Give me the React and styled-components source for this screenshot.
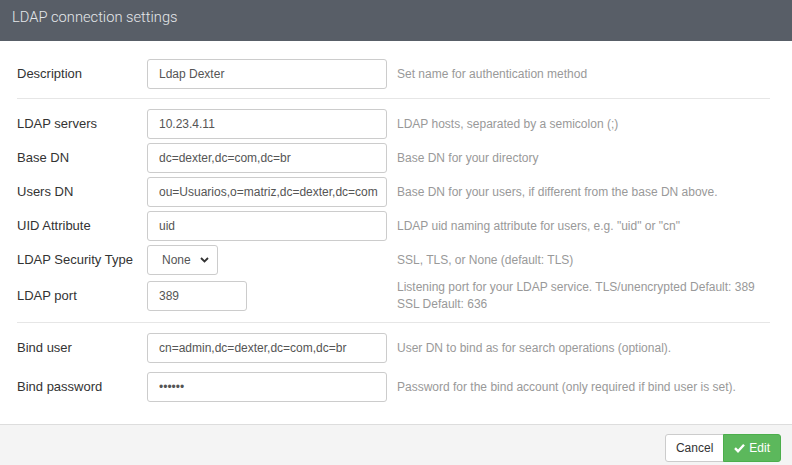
import React from 'react';
import styled, { createGlobalStyle } from 'styled-components';

const Global = createGlobalStyle`
  html, body { margin: 0; padding: 0; background: #fff; overflow: hidden; }
  body { font-family: "Liberation Sans", Arial, sans-serif; font-size: 13px; color: #333; }
`;

const Modal = styled.div`
  width: 792px;
  height: 465px;
  display: flex;
  flex-direction: column;
`;

const Header = styled.div`
  height: 41px;
  background: #585e67;
  color: #e4e7ea;
  font-family: Roboto, sans-serif;
  font-weight: 300;
  font-size: 14.7px;
  padding: 0 12px 7px;
  display: flex;
  align-items: center;
  box-sizing: border-box;
`;

const Body = styled.div`
  padding: 18px 22px 0 17px;
  flex: 1;
`;

const Row = styled.div`
  display: grid;
  grid-template-columns: 130px 250px 1fr;
  align-items: center;
  margin-top: ${p => p.top || 0}px;
  min-height: 30px;
`;

const Label = styled.label`
  font-size: 13px;
  color: #333;
  margin-top: -1px;
`;

const Input = styled.input`
  box-sizing: border-box;
  width: ${p => p.w || 240}px;
  height: 30px;
  border: 1px solid #ccc;
  border-radius: 3px;
  padding: 0 7px 0 11px;
  font-family: "Liberation Sans", Arial, sans-serif;
  font-size: 12px;
  color: #555;
  outline: none;
  background: #fff;
`;

const SelectWrap = styled.div`
  position: relative;
  width: 71px;
  height: 30px;
`;

const Select = styled.select`
  appearance: none;
  box-sizing: border-box;
  width: 71px;
  height: 30px;
  border: 1px solid #ccc;
  border-radius: 3px;
  padding: 0 0 0 14px;
  font-family: "Liberation Sans", Arial, sans-serif;
  font-size: 12px;
  color: #555;
  background: #fff;
`;

const Chevron = styled.svg`
  position: absolute;
  right: 9px;
  top: 12px;
  pointer-events: none;
`;

const Help = styled.div`
  font-size: 12px;
  color: #999;
  line-height: 17px;
`;

const Divider = styled.hr`
  border: 0;
  border-top: 1px solid #e6e6e6;
  margin: 9px 0 10px;
`;

const Footer = styled.div`
  border-top: 1px solid #ddd;
  background: #f4f4f4;
  height: 41px;
  box-sizing: border-box;
  display: flex;
  justify-content: flex-end;
  align-items: flex-start;
  padding: 9px 11px 0 0;
`;

const Button = styled.button`
  height: 28px;
  box-sizing: border-box;
  padding: 0 10px;
  font-family: "Liberation Sans", Arial, sans-serif;
  font-size: 12px;
  display: flex;
  align-items: center;
  gap: 4px;
  border: 1px solid ${p => (p.primary ? '#4cae4c' : '#ccc')};
  background: ${p => (p.primary ? '#5cb85c' : '#fff')};
  color: ${p => (p.primary ? '#fff' : '#333')};
  border-radius: ${p => (p.primary ? '0 3px 3px 0' : '3px 0 0 3px')};
  margin-left: ${p => (p.primary ? '-1px' : '0')};
`;

const Field = ({ label, value, help, top, w, type }) => (
  <Row top={top}>
    <Label>{label}</Label>
    <Input w={w} type={type || 'text'} defaultValue={value} />
    <Help>{help}</Help>
  </Row>
);

export default function App() {
  return (
    <Modal>
      <Global />
      <Header>LDAP connection settings</Header>
      <Body>
        <Field label="Description" value="Ldap Dexter" help="Set name for authentication method" />
        <Divider />
        <Field label="LDAP servers" value="10.23.4.11" help="LDAP hosts, separated by a semicolon (;)" />
        <Field top={4} label="Base DN" value="dc=dexter,dc=com,dc=br" help="Base DN for your directory" />
        <Field top={4} label="Users DN" value="ou=Usuarios,o=matriz,dc=dexter,dc=com" help="Base DN for your users, if different from the base DN above." />
        <Field top={4} label="UID Attribute" value="uid" help={'LDAP uid naming attribute for users, e.g. "uid" or "cn"'} />
        <Row top={4}>
          <Label>LDAP Security Type</Label>
          <SelectWrap>
            <Select defaultValue="None">
              <option>None</option>
              <option>SSL</option>
              <option>TLS</option>
            </Select>
            <Chevron width="9" height="6" viewBox="0 0 9 6">
              <path d="M1 1l3.5 3.5L8 1" fill="none" stroke="#333" strokeWidth="1.8" />
            </Chevron>
          </SelectWrap>
          <Help>SSL, TLS, or None (default: TLS)</Help>
        </Row>
        <Row top={4}>
          <Label>LDAP port</Label>
          <Input w={100} defaultValue="389" />
          <Help>
            Listening port for your LDAP service. TLS/unencrypted Default: 389
            <br />
            SSL Default: 636
          </Help>
        </Row>
        <Divider />
        <Field label="Bind user" value="cn=admin,dc=dexter,dc=com,dc=br" help="User DN to bind as for search operations (optional)." />
        <Field top={9} label="Bind password" type="password" value="secret" help="Password for the bind account (only required if bind user is set)." />
      </Body>
      <Footer>
        <Button>Cancel</Button>
        <Button primary>
          <svg width="11" height="10" viewBox="0 0 11 10">
            <path d="M1 5.2l3 3L10 1.8" fill="none" stroke="#fff" strokeWidth="2.4" />
          </svg>
          Edit
        </Button>
      </Footer>
    </Modal>
  );
}
